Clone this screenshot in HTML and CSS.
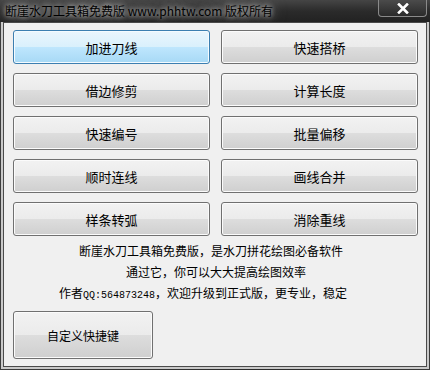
FILE: index.html
```html
<!DOCTYPE html>
<html lang="zh-CN">
<head>
    <meta charset="UTF-8">
    <title>断崖水刀工具箱免费版</title>
    <link rel="stylesheet" href="styles.css">
</head>
<body>
    <div class="window">
        <div class="titlebar">
            <span class="title">断崖水刀工具箱免费版 www.phhtw.com 版权所有</span>
            <span class="close">
                <svg width="14" height="11" viewBox="0 0 14 11">
                    <path d="M3 1.5 L11 9.5 M11 1.5 L3 9.5" stroke="#fff" stroke-width="2.6" stroke-linecap="square"/>
                </svg>
            </span>
        </div>
        <div class="frame">
            <div class="client">
                <div class="tools">
                    <button class="btn hot">加进刀线</button>
                    <button class="btn">快速搭桥</button>
                    <button class="btn">借边修剪</button>
                    <button class="btn">计算长度</button>
                    <button class="btn">快速编号</button>
                    <button class="btn">批量偏移</button>
                    <button class="btn">顺时连线</button>
                    <button class="btn">画线合并</button>
                    <button class="btn">样条转弧</button>
                    <button class="btn">消除重线</button>
                </div>
                <div class="notes">
                    <p class="line first">断崖水刀工具箱免费版，是水刀拼花绘图必备软件</p>
                    <p class="line second">通过它，你可以大大提高绘图效率</p>
                    <p class="line third">作者<span class="num">QQ:564873248</span>，欢迎升级到正式版，更专业，稳定</p>
                </div>
                <button class="btn big">自定义快捷键</button>
            </div>
        </div>
    </div>
</body>
</html>
```

FILE: styles.css
```css
body {
    margin: 0;
    background-color: #3a3a3a;
    font-family: "Noto Sans CJK SC", "Liberation Sans", sans-serif;
}
.window {
    width: 430px;
    height: 370px;
    display: flex;
    flex-direction: column;
    background: linear-gradient(90deg, #3d3d3d 0%, #2c2c2c 60%, #3a3a3a 100%);
}
.titlebar {
    height: 22px;
    display: flex;
    align-items: flex-start;
    background: linear-gradient(180deg, #454545 0%, #2b2b2b 50%, #222 100%);
}
.title {
    padding: 3px 0 0 5px;
    font-size: 12px;
    line-height: 16px;
    color: #000;
    text-shadow: 0 0 5px rgba(255, 255, 255, 0.75), 0 0 10px rgba(220, 220, 220, 0.6), 0 0 16px rgba(200, 200, 200, 0.5);
}
.close {
    margin-left: auto;
    margin-right: 3px;
    width: 47px;
    height: 16px;
    display: flex;
    align-items: center;
    justify-content: center;
    border: 1px solid #8a8a8a;
    border-top: none;
    border-radius: 0 0 4px 4px;
    background: linear-gradient(180deg, #4b4b4b 0%, #2a2a2a 100%);
}
.frame {
    flex: 1;
    margin: 0 1px 1px 1px;
    padding: 0 2px 2px 2px;
    background-color: #c9c9c9;
    display: flex;
}
.client {
    flex: 1;
    border: 1px solid #4a4a4a;
    background-color: #f0f0f0;
    padding: 7px 8px 0 9px;
}
.tools {
    display: grid;
    grid-template-columns: 1fr 1fr;
    grid-auto-rows: 34px;
    column-gap: 11px;
    row-gap: 9px;
}
.btn {
    font-family: "Noto Sans CJK SC", sans-serif;
    font-size: 13px;
    color: #000;
    border: 1px solid #707070;
    border-radius: 3px;
    box-shadow: inset 0 0 0 1px #fbfbfb;
    background: linear-gradient(180deg, #f2f2f2 0%, #ebebeb 50%, #dddddd 51%, #cfcfcf 100%);
    padding: 0;
}
.btn.hot {
    border-color: #3c7fb1;
    box-shadow: inset 0 0 0 1px #f4fbff;
    background: linear-gradient(180deg, #eaf6fd 0%, #d9f0fc 50%, #bee6fd 51%, #a7d9f5 100%);
}
.notes {
    margin-top: 4px;
}
.line {
    margin: 0;
    font-size: 12px;
    line-height: 21px;
    color: #000;
    white-space: nowrap;
}
.first {
    padding-left: 66px;
}
.second {
    padding-left: 113px;
}
.third {
    padding-left: 46px;
}
.num {
    font-family: "Liberation Mono", monospace;
    font-size: 10px;
}
.big {
    margin-top: 5px;
    width: 140px;
    height: 48px;
    font-size: 12px;
}
```
